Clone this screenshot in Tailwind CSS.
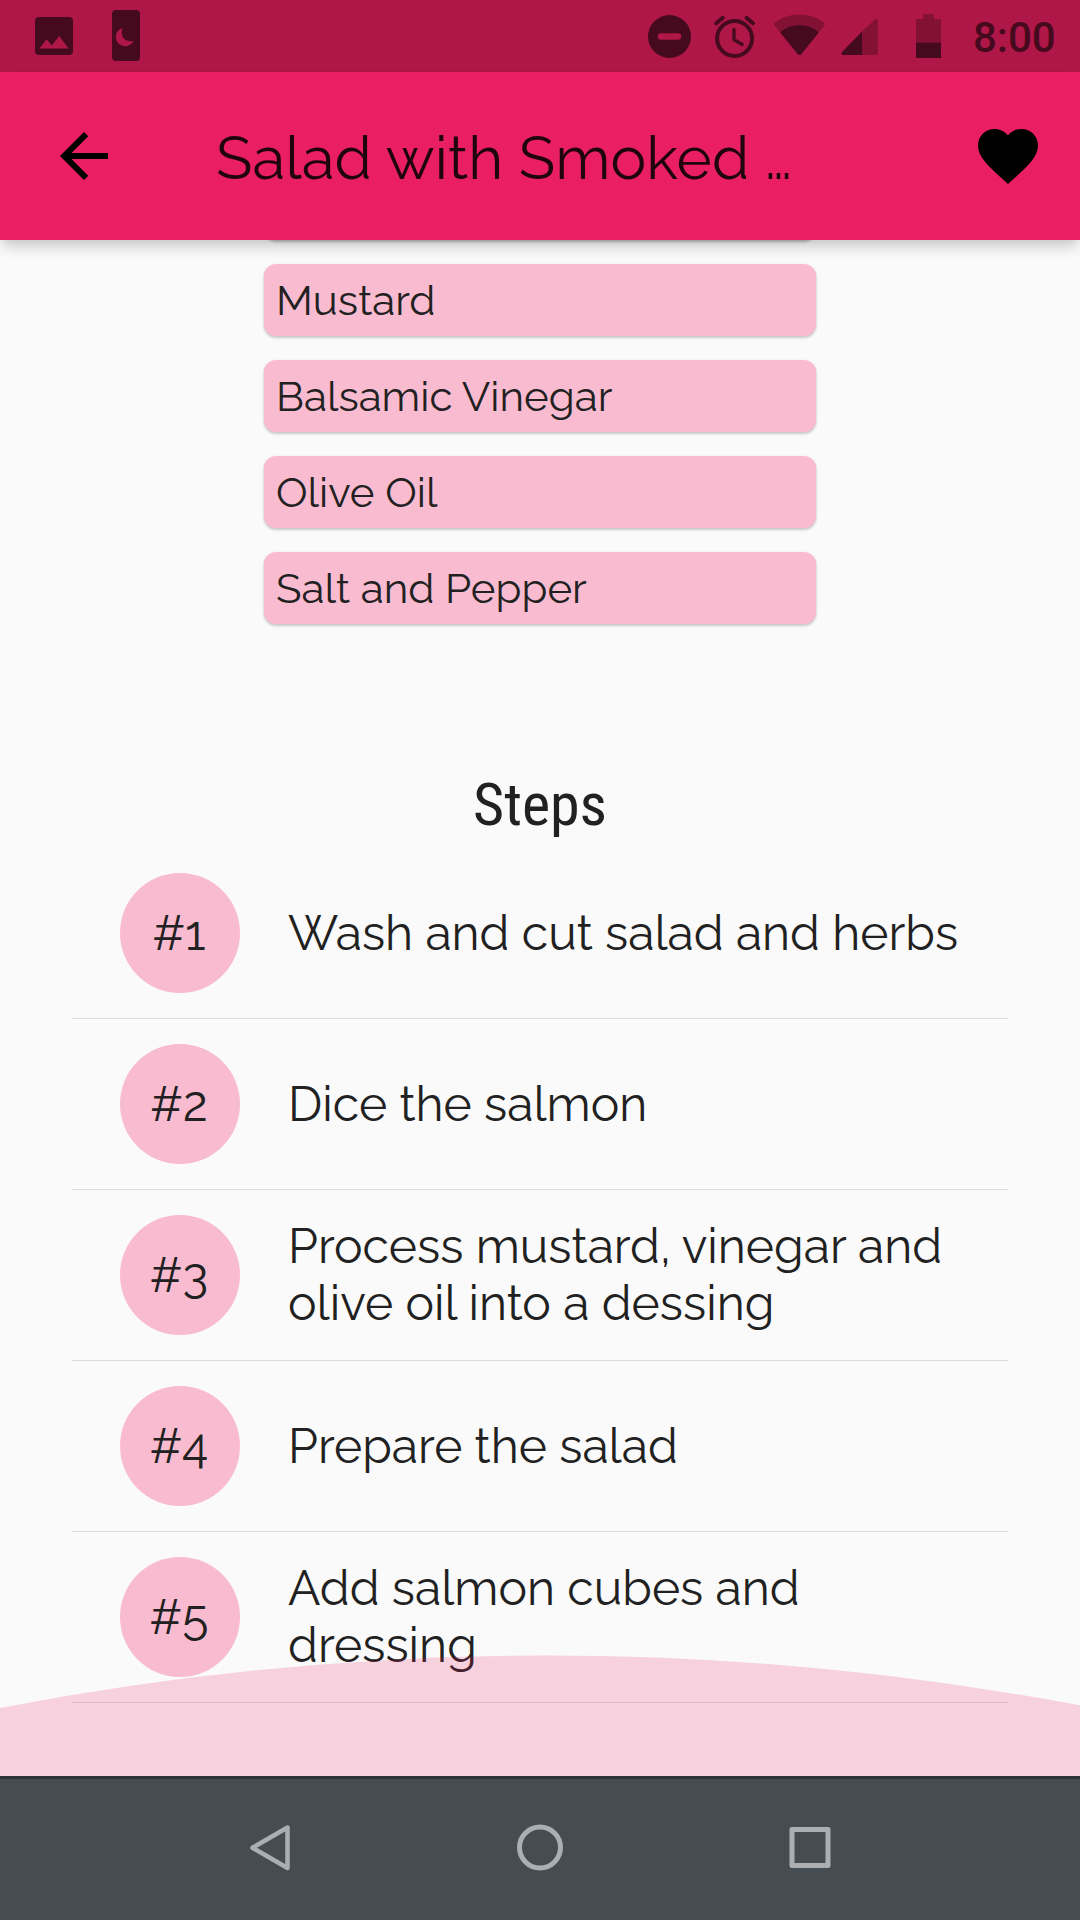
<!DOCTYPE html>
<html lang="en">
<head>
<meta charset="utf-8">
<meta name="viewport" content="width=device-width, initial-scale=1">
<title>Salad with Smoked Salmon</title>
<script src="https://cdn.jsdelivr.net/npm/@tailwindcss/browser@4"></script>
</head>
<body class="bg-[#fafafa]">
<div class="relative flex h-[1920px] w-[1080px] flex-col overflow-hidden bg-[#fafafa] font-['Raleway','Lato',sans-serif] font-normal tracking-[0.03px] text-[#212121]">

  <!-- Status bar -->
  <div class="z-10 flex h-[72px] shrink-0 items-center justify-between bg-[#af1748] pr-[24px] pl-[35px] tracking-normal text-[#450a1d]">
    <div class="flex items-center gap-[39px]">
      <svg class="h-[72px] w-[38px]" viewBox="35 0 38 72" fill="currentColor"><path fill-rule="evenodd" d="M39 17H69a4 4 0 0 1 4 4V51a4 4 0 0 1-4 4H39a4 4 0 0 1-4-4V21a4 4 0 0 1 4-4ZM39.500 48.500H68.500L59.300 36L51.700 45.500L46.600 39.300Z"/></svg>
      <svg class="h-[72px] w-[28px]" viewBox="112 0 28 72" fill="currentColor"><path fill-rule="evenodd" d="M116 10H136a4 4 0 0 1 4 4V57a4 4 0 0 1-4 4H116a4 4 0 0 1-4-4V14a4 4 0 0 1 4-4ZM122.500 28A9.300 9.300 0 1 0 133.500 41C125 43 119.500 36 122.500 28Z"/></svg>
    </div>
    <div class="flex items-center">
      <svg class="h-[72px] w-[312px]" viewBox="648 0 312 72" fill="currentColor">
        <!-- Do not disturb -->
        <path fill-rule="evenodd" d="M669.500 15a21.500 21.500 0 1 1 0 43a21.500 21.500 0 0 1 0-43ZM661 33.200a3.300 3.300 0 0 0 0 6.600H678a3.300 3.300 0 0 0 0-6.600Z"/>
        <!-- Alarm -->
        <g fill="none" stroke="currentColor" stroke-linecap="round"><circle cx="734.600" cy="38.500" r="17.500" stroke-width="4"/><path stroke-width="4" d="M716.300 23.300L722.800 17.800M753 23.300L746.500 17.800"/><path stroke-width="3.300" stroke-linejoin="round" d="M734 29.500V39.700L742.200 44.500"/></g>
        <!-- Wi-Fi -->
        <path opacity=".42" d="M774.500 25.500Q773.400 23.700 775 22.500Q786 14.600 799.500 14.600T824 22.500Q825.600 23.700 824.500 25.500L819 32.200Q810.500 25 799.500 25T780 32.200Z"/>
        <path d="M780 32.200Q788.500 25 799.500 25T819 32.200L801.500 54Q799.500 56 797.500 54Z"/>
        <!-- Mobile signal -->
        <path opacity=".42" d="M862 31.500L875 19.500Q878 18 878 21V53Q878 55 876 55H862Z"/>
        <path d="M862 31.500V55H843Q840.500 54.500 842 52Z"/>
        <!-- Battery -->
        <path opacity=".42" d="M923 14H934V19H941V42.500H916V19H923Z"/><path d="M916 42.500H941V58H916Z"/>
      </svg>
      <span class="ml-[13px] w-[83px] pt-[4px] font-['Roboto',sans-serif] text-[42px] leading-[50px] font-medium">8:00</span>
    </div>
  </div>

  <!-- App bar -->
  <header class="z-10 flex h-[168px] shrink-0 items-center bg-[#ea1e63] pr-[36px] pl-[48px] text-black shadow-[0_6px_12px_-3px_rgba(0,0,0,0.14),0_10px_14px_-2px_rgba(0,0,0,0.1)]">
    <svg class="size-[72px]" viewBox="0 0 24 24" fill="currentColor"><path d="M20 11H7.830l5.590-5.590L12 4l-8 8 8 8 1.410-1.410L7.830 13H20v-2z"/></svg>
    <h1 class="ml-[96px] flex-1 pt-[3px] text-[60px] leading-[70px] font-normal tracking-[0.12px] whitespace-nowrap text-black/87">Salad with Smoked …</h1>
    <svg class="size-[72px]" viewBox="0 0 24 24" fill="currentColor"><path d="M12 21.350l-1.450-1.320C5.400 15.360 2 12.280 2 8.500 2 5.420 4.420 3 7.500 3c1.740 0 3.410.810 4.500 2.090C13.090 3.810 14.760 3 16.500 3 19.580 3 22 5.420 22 8.500c0 3.780-3.400 6.860-8.550 11.540L12 21.350z"/></svg>
  </header>

  <main class="relative flex-1">
    <!-- Ingredients; the first card is scrolled under the app bar -->
    <ul class="mx-auto -mt-[72px] flex w-[552px] flex-col gap-[24px] text-[42px] leading-[49px]">
      <li class="h-[72px] rounded-[12px] bg-[#f9bbd0] shadow-[0_2px_3px_rgba(0,0,0,0.18),0_1px_3px_rgba(0,0,0,0.12)]"></li>
      <li class="flex h-[72px] items-center rounded-[12px] bg-[#f9bbd0] px-[12px] shadow-[0_2px_3px_rgba(0,0,0,0.14),0_1px_3px_rgba(0,0,0,0.12)]">Mustard</li>
      <li class="flex h-[72px] items-center rounded-[12px] bg-[#f9bbd0] px-[12px] shadow-[0_2px_3px_rgba(0,0,0,0.14),0_1px_3px_rgba(0,0,0,0.12)]">Balsamic Vinegar</li>
      <li class="flex h-[72px] items-center rounded-[12px] bg-[#f9bbd0] px-[12px] shadow-[0_2px_3px_rgba(0,0,0,0.14),0_1px_3px_rgba(0,0,0,0.12)]">Olive Oil</li>
      <li class="flex h-[72px] items-center rounded-[12px] bg-[#f9bbd0] px-[12px] shadow-[0_2px_3px_rgba(0,0,0,0.14),0_1px_3px_rgba(0,0,0,0.12)]">Salt and Pepper</li>
    </ul>

    <!-- Steps -->
    <h2 class="mt-[146px] text-center font-['Roboto_Condensed','Roboto',sans-serif] text-[60px] leading-[70px] font-normal tracking-normal">Steps</h2>
    <ol class="mx-[72px] mt-[8px] text-[48px] leading-[57px]">
      <li class="flex h-[171px] items-center gap-[48px] border-b border-[#dcdcdc] pl-[48px]"><span class="flex size-[120px] shrink-0 items-center justify-center rounded-full bg-[#f9bbd0] pr-[2px]">#1</span><span class="whitespace-nowrap">Wash and cut salad and herbs</span></li>
      <li class="flex h-[171px] items-center gap-[48px] border-b border-[#dcdcdc] pl-[48px]"><span class="flex size-[120px] shrink-0 items-center justify-center rounded-full bg-[#f9bbd0] pr-[2px]">#2</span><span class="whitespace-nowrap">Dice the salmon</span></li>
      <li class="flex h-[171px] items-center gap-[48px] border-b border-[#dcdcdc] pl-[48px]"><span class="flex size-[120px] shrink-0 items-center justify-center rounded-full bg-[#f9bbd0] pr-[2px]">#3</span><span class="whitespace-nowrap">Process mustard, vinegar and<br>olive oil into a dessing</span></li>
      <li class="flex h-[171px] items-center gap-[48px] border-b border-[#dcdcdc] pl-[48px]"><span class="flex size-[120px] shrink-0 items-center justify-center rounded-full bg-[#f9bbd0] pr-[2px]">#4</span><span class="whitespace-nowrap">Prepare the salad</span></li>
      <li class="flex h-[171px] items-center gap-[48px] border-b border-[#dcdcdc] pl-[48px]"><span class="flex size-[120px] shrink-0 items-center justify-center rounded-full bg-[#f9bbd0] pr-[2px]">#5</span><span class="whitespace-nowrap">Add salmon cubes and<br>dressing</span></li>
    </ol>

    <!-- Translucent curved footer over the list -->
    <svg class="absolute bottom-0 left-0 h-[121px] w-[1080px]" viewBox="0 0 1080 121" fill="#e91e63" fill-opacity=".19"><path d="M0 53Q540 -50.700 1080 50.300V121H0Z"/></svg>
  </main>

  <!-- Navigation bar -->
  <nav class="z-10 flex h-[144px] shrink-0 items-center justify-center gap-[198px] border-t-[3px] border-[#2d3437] bg-[#464d52] pb-[1px] text-[#abafb1]">
    <svg class="size-[72px]" viewBox="234 1812 72 72" fill="none" stroke="currentColor" stroke-width="4.500" stroke-linejoin="round"><path d="M287.500 1826.500V1867L252.500 1846.800Z"/></svg>
    <svg class="size-[72px]" viewBox="0 0 72 72" fill="none" stroke="currentColor" stroke-width="5"><circle cx="36" cy="34.500" r="20.500"/></svg>
    <svg class="size-[72px]" viewBox="0 0 72 72" fill="none" stroke="currentColor" stroke-width="5" stroke-linejoin="round"><path d="M18 16.500H54V52.500H18Z"/></svg>
  </nav>
</div>
</body>
</html>
